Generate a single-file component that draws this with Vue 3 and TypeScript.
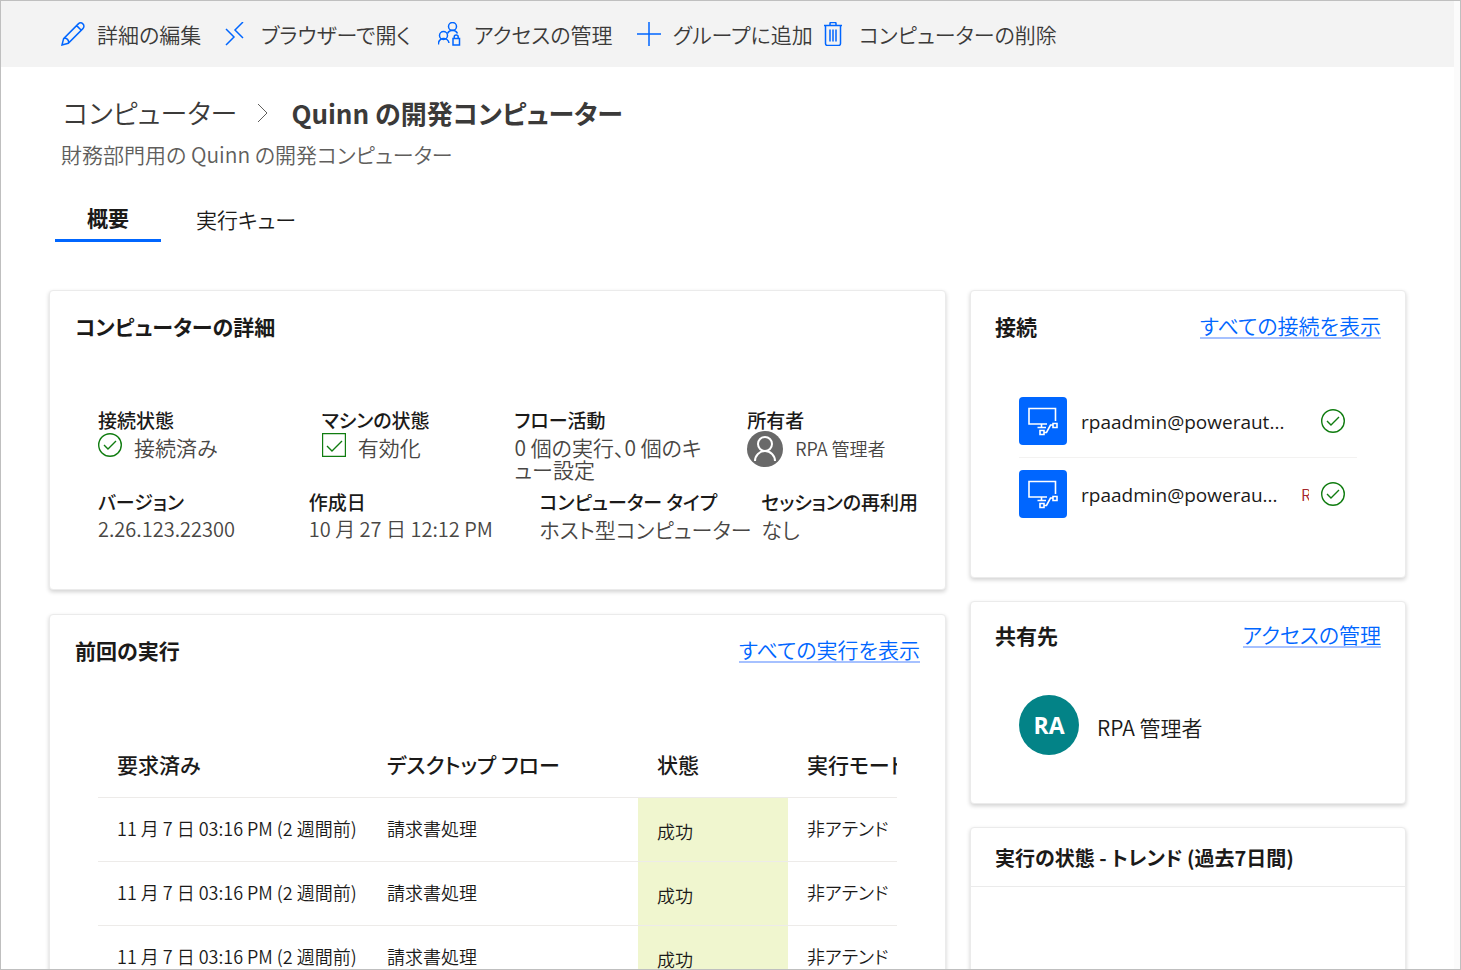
<script setup lang="ts">
interface Connection {
  name: string
  tag: string
}
interface Run {
  requested: string
  flow: string
  status: string
  mode: string
}

const connections: Connection[] = [
  { name: 'rpaadmin@poweraut...', tag: '' },
  { name: 'rpaadmin@powerau...', tag: 'R' },
]

const runs: Run[] = [1, 2, 3].map(() => ({
  requested: '11 月 7 日 03:16 PM (2 週間前)',
  flow: '請求書処理',
  status: '成功',
  mode: '非アテンド',
}))
</script>

<template>
  <div class="shell">
    <div class="page">
      <nav class="toolbar" aria-label="コマンド">
        <button type="button" class="command">
          <svg class="icon24" viewBox="0 0 24 24" aria-hidden="true">
            <path d="M1 23l1.600-6.400L17.300 1.900a3 3 0 0 1 4.600 0 3.200 3.200 0 0 1 0 4.700L7.300 21.300zM2.600 16.600a3.600 3.600 0 0 1 4.700 4.700M15.600 3.600l4.700 4.700" />
          </svg>
          <span>詳細の編集</span>
        </button>
        <button type="button" class="command">
          <svg class="icon24" viewBox="0 0 24 24" aria-hidden="true">
            <path d="M18 0l-8 8 8 8M1 7l8 8-8 8" />
          </svg>
          <span>ブラウザーで開く</span>
        </button>
        <button type="button" class="command">
          <svg class="icon24" viewBox="0 0 24 24" aria-hidden="true">
            <circle cx="14.500" cy="4.500" r="4" />
            <circle cx="5.500" cy="13.500" r="4" />
            <path d="M.500 22.500a5 5 0 0 1 10.500-1.500M9.500 11.500a5.500 5.500 0 0 1 10 0M15 16.500h6.500v6.500h-6.500zM16.200 16.500v-1.500a2 2 0 0 1 4 0v1.500" />
          </svg>
          <span>アクセスの管理</span>
        </button>
        <button type="button" class="command">
          <svg class="icon24" viewBox="0 0 24 24" aria-hidden="true">
            <path d="M12 0v24M0 12h24" />
          </svg>
          <span>グループに追加</span>
        </button>
        <button type="button" class="command">
          <svg class="icon24" viewBox="0 0 24 24" aria-hidden="true">
            <path d="M1 3.500h18M7 3.500v-2q0-1 1-1h4q1 0 1 1v2M2.500 3.500v18q0 2 2 2h11q2 0 2-2v-18M7 7.500v12M10 7.500v12M13 7.500v12" />
          </svg>
          <span>コンピューターの削除</span>
        </button>
      </nav>

      <header class="heading">
        <div class="crumbs">
          <a class="crumb" href="#">コンピューター</a>
          <svg class="chevron" viewBox="0 0 12 20" aria-hidden="true"><path d="M1 1l9 9-9 9" /></svg>
          <h1>Quinn の開発コンピューター</h1>
        </div>
        <p class="subtitle">財務部門用の Quinn の開発コンピューター</p>
      </header>

      <div class="tabs" role="tablist">
        <button type="button" class="tab active" role="tab" aria-selected="true">概要</button>
        <button type="button" class="tab" role="tab" aria-selected="false">実行キュー</button>
      </div>

      <main class="columns">
        <div class="stack">
          <section class="card">
            <div class="card-head"><h2>コンピューターの詳細</h2></div>
            <div class="details">
              <dl class="facts first">
                <div>
                  <dt>接続状態</dt>
                  <dd class="with-icon">
                    <svg class="ok" viewBox="0 0 24 24" aria-hidden="true"><circle cx="12" cy="12" r="11.300" /><path d="M6 12l4 4 8-8" /></svg>
                    <span>接続済み</span>
                  </dd>
                </div>
                <div>
                  <dt>マシンの状態</dt>
                  <dd class="with-icon">
                    <svg class="ok" viewBox="0 0 24 24" aria-hidden="true"><path d="M.5.5h23v23H.500zM5 13l5 5L20 8" /></svg>
                    <span>有効化</span>
                  </dd>
                </div>
                <div>
                  <dt>フロー活動</dt>
                  <dd class="activity">0 個の実行、0 個のキュー設定</dd>
                </div>
                <div>
                  <dt>所有者</dt>
                  <dd class="owner">
                    <svg class="person" viewBox="0 0 36 36" aria-hidden="true">
                      <circle class="disc" cx="18" cy="18" r="18" />
                      <circle cx="18" cy="13" r="7" />
                      <path d="M8 30a10 10 0 0 1 20 0" />
                    </svg>
                    <span>RPA 管理者</span>
                  </dd>
                </div>
              </dl>
              <dl class="facts second">
                <div><dt>バージョン</dt><dd class="figures">2.26.123.22300</dd></div>
                <div><dt>作成日</dt><dd class="figures">10 月 27 日 12:12 PM</dd></div>
                <div><dt>コンピューター タイプ</dt><dd>ホスト型コンピューター</dd></div>
                <div><dt>セッションの再利用</dt><dd>なし</dd></div>
              </dl>
            </div>
          </section>

          <section class="card">
            <div class="card-head">
              <h2>前回の実行</h2>
              <a class="link" href="#">すべての実行を表示</a>
            </div>
            <div class="runs">
              <table>
                <colgroup><col class="wide" /><col class="wide" /><col class="narrow" /><col /></colgroup>
                <thead>
                  <tr><th>要求済み</th><th>デスクトップ フロー</th><th>状態</th><th>実行モード</th></tr>
                </thead>
                <tbody>
                  <tr v-for="(run, i) in runs" :key="i">
                    <td>{{ run.requested }}</td>
                    <td>{{ run.flow }}</td>
                    <td class="status">{{ run.status }}</td>
                    <td>{{ run.mode }}</td>
                  </tr>
                </tbody>
              </table>
            </div>
          </section>
        </div>

        <div class="stack side">
          <section class="card">
            <div class="card-head">
              <h2>接続</h2>
              <a class="link" href="#">すべての接続を表示</a>
            </div>
            <ul class="connections">
              <li v-for="(item, i) in connections" :key="i">
                <svg class="tile" viewBox="0 0 48 48" aria-hidden="true">
                  <rect width="48" height="48" rx="4" />
                  <path d="M28 27H10V11.500h26.500v12.500M22.500 27v3M18.500 30.500h8.500M25.500 35.500h2l4-7.500H34M34 26.500h4v4h-4zM21 33.500h4v4h-4z" />
                </svg>
                <span class="account">{{ item.name }}</span>
                <span v-if="item.tag" class="tag">{{ item.tag }}</span>
                <svg class="ok" viewBox="0 0 24 24" aria-hidden="true"><circle cx="12" cy="12" r="11.300" /><path d="M6 12l4 4 8-8" /></svg>
              </li>
            </ul>
          </section>

          <section class="card share">
            <div class="card-head">
              <h2>共有先</h2>
              <a class="link" href="#">アクセスの管理</a>
            </div>
            <div class="shared">
              <span class="initials">RA</span>
              <span class="member">RPA 管理者</span>
            </div>
          </section>

          <section class="card trend">
            <div class="card-head"><h2>実行の状態 - トレンド (過去7日間)</h2></div>
          </section>
        </div>
      </main>
    </div>
  </div>
</template>

<style>
body {
  margin: 0;
}
</style>

<style scoped>
.shell {
  box-sizing: border-box;
  height: 100vh;
  overflow: hidden;
  border: 1px solid #bfbfbf;
  padding-right: 6px;
  background: #fbfbfb;
  color: #1b1a19;
  font-family: "Noto Sans CJK JP", sans-serif;
  font-size: 21px;
  font-weight: 350;
  line-height: 28px;
  font-feature-settings: "palt";
}
.page {
  display: flex;
  flex-direction: column;
  height: 100%;
  background: #fff;
}
svg {
  flex: none;
  fill: none;
}
h1, h2, p, dl, dd, ul {
  margin: 0;
  padding: 0;
}
.toolbar {
  flex: none;
  display: grid;
  grid-template-columns: 164px 213px 199px 186px auto;
  height: 66px;
  padding-left: 60px;
  background: #f3f3f3;
}
.command {
  display: flex;
  align-items: center;
  gap: 12px;
  border: 0;
  padding: 0;
  background: none;
  color: #3b3a39;
  font: inherit;
  font-feature-settings: inherit;
  white-space: nowrap;
}
.icon24 {
  width: 24px;
  height: 24px;
  stroke: #0066ff;
  stroke-width: 1.500;
}
.heading {
  padding: 30px 60px 0;
}
.crumbs {
  display: flex;
  align-items: center;
  padding-left: 2px;
  line-height: 32px;
  font-size: 27px;
}
.crumb {
  color: #3b3a39;
  text-decoration: none;
}
.chevron {
  width: 12px;
  height: 20px;
  margin: 0 22px 0 20px;
  stroke: #605e5c;
}
h1 {
  color: #3b3a39;
  font-size: 26px;
  font-weight: 700;
}
.subtitle {
  margin-top: 11px;
  color: #605e5c;
}
.tabs {
  display: flex;
  gap: 3px;
  padding: 35px 54px 0;
}
.tab {
  border: 0;
  border-bottom: 3px solid transparent;
  padding: 2px 32px 6px;
  background: none;
  color: #1b1a19;
  font: inherit;
  font-feature-settings: inherit;
}
.tab.active {
  padding: 0 32px 8px;
  border-bottom-color: #0066ff;
  font-weight: 700;
}
.columns {
  display: grid;
  grid-template-columns: 897fr 436fr;
  gap: 24px;
  flex: 1;
  min-height: 0;
  padding: 48px 48px 0;
}
.stack {
  display: flex;
  flex-direction: column;
  gap: 24px;
  min-width: 0;
}
.side {
  gap: 23px;
}
.card {
  flex: none;
  border: 1px solid #ebebeb;
  border-radius: 4px;
  padding-bottom: 48px;
  background: #fff;
  box-shadow: 0 2px 4px rgba(0, 0, 0, 0.18);
}
.card-head {
  display: flex;
  justify-content: space-between;
  align-items: center;
  padding: 19px 25px 21px;
}
.side .card-head {
  padding: 19px 24px 21px;
}
h2 {
  font-size: 21px;
  font-weight: 700;
  line-height: 32px;
}
.link {
  border-bottom: 2px solid #a6c1ff;
  color: #0066ff;
  line-height: 24px;
  text-decoration: none;
}
.details {
  display: flex;
  flex-direction: column;
  gap: 8px;
  padding: 43px 26px 1px 48px;
}
.facts {
  display: grid;
}
.first {
  grid-template-columns: 224fr 193fr 233fr 172fr;
}
.second {
  grid-template-columns: 211fr 231fr 222fr 158fr;
}
.facts > div {
  min-width: 0;
}
dt {
  margin-bottom: 2px;
  font-size: 19px;
  font-weight: 500;
  white-space: nowrap;
}
dd {
  color: #484644;
  line-height: 22px;
  white-space: nowrap;
}
.figures {
  font-size: 20px;
}
.activity {
  padding-right: 40px;
  white-space: normal;
}
.with-icon {
  display: flex;
  align-items: flex-start;
  gap: 12px;
}
.ok {
  width: 24px;
  height: 24px;
  stroke: #107c10;
  stroke-width: 1.400;
}
.with-icon .ok {
  margin-top: -3px;
}
.owner {
  display: flex;
  align-items: center;
  gap: 12px;
  padding-top: 1px;
  font-size: 18px;
}
.person {
  width: 36px;
  height: 36px;
  margin: -6px 0 -8px;
  stroke: #fff;
  stroke-width: 2;
}
.disc {
  fill: #696969;
  stroke: none;
}
.runs {
  margin: 46px 48px 0;
  overflow: hidden;
}
table {
  width: 100%;
  table-layout: fixed;
  border-collapse: collapse;
}
.wide {
  width: 270px;
}
.narrow {
  width: 150px;
}
th, td {
  box-sizing: border-box;
  height: 64px;
  padding: 0 0 2px 19px;
  border-bottom: 1px solid #edebe9;
  text-align: left;
  white-space: nowrap;
}
th {
  font-weight: 500;
}
td {
  font-size: 18px;
}
.status {
  padding-top: 6px;
  background: #f0f6cf;
}
.connections {
  padding: 22px 48px 0;
  list-style: none;
}
.connections li {
  box-sizing: border-box;
  display: flex;
  align-items: center;
  height: 72px;
}
.connections li + li {
  border-top: 1px solid #f3f2f1;
}
.tile {
  width: 48px;
  height: 48px;
  stroke: #fff;
  stroke-width: 1.600;
}
.tile rect {
  fill: #0066ff;
  stroke: none;
}
.account {
  flex: 1;
  min-width: 0;
  margin-left: 14px;
  padding-top: 2px;
  font-family: "Open Sans", sans-serif;
  font-size: 19px;
  font-weight: 400;
  white-space: nowrap;
}
.tag {
  width: 8px;
  margin-right: 12px;
  overflow: hidden;
  color: #a4262c;
  font-size: 16px;
}
.connections .ok {
  margin-right: 12px;
}
.side .share .card-head {
  padding: 17px 24px 21px;
}
.shared {
  display: flex;
  align-items: center;
  gap: 18px;
  padding: 23px 48px 0;
}
.member {
  padding-top: 4px;
}
.initials {
  display: flex;
  align-items: center;
  justify-content: center;
  width: 60px;
  height: 60px;
  border-radius: 50%;
  background: #038387;
  color: #fff;
  font-family: "Open Sans", sans-serif;
  font-size: 23px;
  font-weight: 700;
}
.side .trend {
  flex: 1;
  padding: 0;
}
.side .trend .card-head {
  padding: 14px 24px 12px;
  border-bottom: 1px solid #ebebeb;
}
.trend h2 {
  font-size: 20px;
}
</style>
